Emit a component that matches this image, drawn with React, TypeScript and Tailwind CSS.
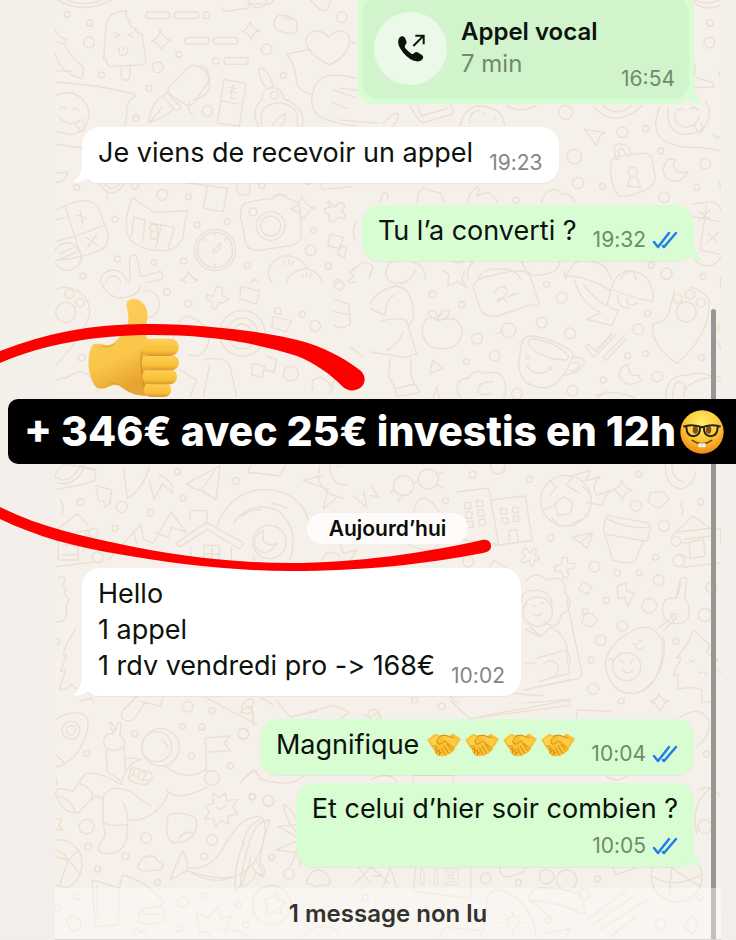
import React from "react";
import clsx from "clsx";

type Doodle = {
  x: number;
  y: number;
  dots: number[][];
  paths: string[];
};

// Wallpaper line art, one block per area, drawn at three times its final size
const doodles: Doodle[] = [
  {
    x: 0,
    y: 0,
    dots: [
      [202, 43, 9], [269, 69, 9], [267, 127, 16], [619, 46, 10], [537, 163, 9],
      [473, 202, 16], [305, 225, 9], [447, 265, 9], [408, 354, 9], [622, 333, 16],
      [648, 183, 10], [800, 148, 16], [1026, 51, 16], [850, 226, 9], [823, 286, 12],
      [230, 562, 9], [405, 557, 10], [487, 585, 16], [565, 590, 9], [730, 565, 21],
      [786, 557, 9], [345, 658, 9], [591, 674, 9], [682, 664, 9], [352, 777, 9],
      [462, 788, 8], [551, 783, 9], [249, 828, 9], [501, 875, 10], [742, 796, 9],
      [932, 751, 16], [941, 691, 9], [985, 799, 9], [925, 546, 8], [759, 636, 12],
      [812, 678, 43], [812, 678, 30], [645, 750, 62], [645, 750, 53], [340, 850, 40],
      [340, 850, 22], [202, 770, 41],
    ],
    paths: [
      "M172 0q80 45 162 0M200 0q55 22 106 0",
      "M311 178l7-105q8-40 62-40q-8 20 8 25q-4 26 18 28q2 16 20 15l12 77q0 14-15 17l-90 4q-16-1-14-21zM365 197l-1 32q0 12 12 12t13-12l1-34M344 98l15 8-15 8M400 96l-15 8 15 8M357 142v13q0 10 12 10t14-10v-15M370 142v12",
      "M445 36h57q8 0 8 10t-8 10h-57q-8 0-8-10t8-10zM531 36h57q8 0 8 10t-8 10h-57q-8 0-8-10t8-10zM562 112h57q8 0 8 10t-8 10h-57q-8 0-8-10t8-10zM648 112h57q8 0 8 10t-8 10h-57q-8 0-8-10t8-10zM680 173h57q8 0 8 10t-8 10h-57q-8 0-8-10t8-10z",
      "M480 90q8 27 34 31q-26 9-28 32q-10-26-31-30q22-6 25-33zM750 65q7 23 29 26q-23 7-25 28q-9-22-29-25q20-6 25-29z",
      "M165 85q8 30 35 32l-10 15-25-8M165 160q15 60 80 75q16-38-15-50q-30-30-38-60M165 212l52 2",
      "M165 246q130 8 234 35q12 3 4 10q-30 18-22 50l-6 37M165 432l80 12M165 287q40-20 72 2q38 26 27 70q-10 40-50 44l-49-8M178 328q10-16 20 0M218 330q10-14 18 3M178 352q28 30 62 10M225 372l18 22q14-2 12-15l-8-20",
      "M562 205q20-20 45 3q24 14 18 40l-45 62q-14 12-28 1l-40-26q-15-12-2-28zM600 198l20 8q12 32 8 62q-14 26-48 30M495 284q-6 10 4 18l24 26q10 8 20-6l-42-45zM495 284q-40 20-50 84q54-14 75-42M447 368l40-45M567 305q-8 30 12 38",
      "M672 238l66 12-20 128-66-8zM662 302l65 12M688 262l22 4M700 254l-8 36q2 8 14 6M688 275l22 4",
      "M775 378q-26-44 12-80q-4-24 20-34q38-6 44 32q70 30 55 82M786 378q-16-64 50-70q66 6 55 70M780 205q22-4 40 56M802 268q-30-34-24-63M818 378q10-24 38-38q2 24-14 38",
      "M668 22q-6 12 10 12l65-10q8-6 2-14l60 4q10-4 16-14M745 0q10 28 35 22q20-2 18-22M930 0l32 30q26 10 28-30M830 50q20-12 60 12v35q-26 10-64-10q-10-18 4-37zM852 45l4 10 24 4",
      "M988 195q-90-48-64-90q32-28 62 8q30-36 60-8q14 56-58 90zM860 162l70-14M860 162q30 40 30 90q12 24 42 30M1065 235q-90-26-118 18q-28 60 10 96q50 24 110 28M1000 270l65 22M995 307l50 20M1048 125l16 4",
      "M166 515q20 10 36 0q0 30-36 33M295 547q40 64 80 0M312 547q24 36 50 0M322 582v18",
      "M165 632q45-26 90-30q34 2 44 28l24 70q6 36-24 52q-70 26-130 28M195 618l52 162M165 725q60-12 142-48M230 645l30 10M240 632l8 38M258 712l35 24M290 704l-28 40M165 660l35-8M180 760l40-18M170 782l60-26",
      "M402 592l10 12 52 34 30-2 70-4q-12 36-14 78q-14 40-60 42q-66 0-98-32q-20-30-10-80q10-40 20-48zM402 652l-8 58M434 660q0 30-8 68M484 672l-18 78M524 682l-20 66M400 652l34 8M448 668l76 14M458 672q-20 14 0 22q-16 20 4 24q20-8 6-24q14-16-10-22",
      "M550 547l130 18M622 560l-12 66 60 9 12-72M962 550l4 18 90-8",
      "M735 610q40-12 84-14q10-14 36-8l12 10q30 2 33 30l4 76q-2 26-30 32l-100 16q-34 0-38-30l-14-70q-2-30 13-42zM818 590q20-14 38-2M906 590q10 28 38 34q-28 14-32 36q-14-26-40-34q26-8 34-36z",
      "M985 603q10 6 20 18q14-16 22-14q14 10-2 26q16 12 8 24l-20-6q-8 20-24 12q-6-10 0-20q-20-4-14-18l18-4q-14-14-8-18zM1078 595l24 5-3 18-22-4zM990 702l40 10-8 34-38-8zM1020 734l20 12-8 28-18-10z",
      "M640 750l20-20q6 10-8 24q-20 6-12-4M645 700v6M692 750h8M645 792v6M600 750h-8M680 715l-6 5M612 718l6 4",
      "M390 838l-2-60q6-20 22-10l12 62 60-16q12 10 2 24l-100 24zM400 862l36 60M165 870q10-14 30-8q30-8 34 18q30-6 34 16",
      "M565 815q10 22 30 25q-22 8-26 25q-10-22-28-25q20-6 24-25zM615 870l20 5 10-24 16 4-2 20q20 6 24 12l-14 10-16-2-8 24-14-6 2-20-20-4z",
      "M722 870l20-20 40 14-8 30-50-4zM750 852l12-14 14 8-4 18",
      "M805 830q-4-44 48-62q6 4 10-2q60 16 55 42M805 830q20 40 58 36M850 782l6 14M866 778v14M880 782l-4 12M858 855q4-40 58-50q50 10 54 60q-10 30-30 36M905 822l6 12M920 818v14M934 820l-3 14M858 855q0 30 20 46",
      "M1068 800q12 2 14 14l18-18 8 10-20 18 24 8-4 14-24-4 2 18-14 2-4-18-18 8-4-12 16-10-14-14z",
      "M1080 650q-34 36-10 76M1000 850l14-14 16 14-12 16z",
    ],
  },
  {
    x: 340,
    y: 0,
    dots: [
      [1110, 68, 10], [1108, 128, 16], [677, 337, 21], [847, 397, 16], [917, 386, 9],
      [703, 470, 22], [962, 453, 9], [1096, 491, 16], [714, 549, 17], [788, 559, 9],
      [1070, 562, 9], [973, 592, 16], [528, 601, 9], [934, 796, 9], [979, 821, 17],
      [878, 515, 14],
    ],
    paths: [
      "M1060 8q40 28 85 6M1062 0q40 18 80-2",
      "M960 320q-30 70 10 100q40 26 110 22l64 10M985 320q-10 60 30 80q60 12 86-30q16-40-4-66M1004 340q-2 36 30 42q40-4 44-36M1010 332q12-14 22 0M1050 328q14-12 24 2M1064 376l10 22q12-2 16-10l-6-22M1064 190q4 30-4 40l60 18v14h-60",
      "M734 388l60 10q-20 10-24 40zM1120 405l12 10 10-8M1138 215v15M1136 540l6 24",
      "M824 452q-6-24 24-20q20 6 26 30l-14 8q-6-20-16-24q-12 2-8 14l2 14-10 4zM828 470l80-10q26-2 30 24l8 50q-2 24-26 34q-60 28-86 18q-26-38-22-90q2-20 16-26zM872 528l-10 30 40 4-14-34",
      "M982 478q-20 30-6 52q40 34 68-16q-28 10-38-6q-12-14 0-28q-14-6-24-2z",
      "M1058 612l60-8q20 6 27 30M1058 650l88 16M1100 618l-20 130M1080 635l30 24M1110 630l-34 34M1105 700l28 28M1135 696l-34 34M1084 750l60 14M1064 780q44 40 80-10",
      "M210 318q20 40 38 50l90-26q4-18-6-26M234 318l10 30 76-22M360 378q14-60 60-60q70 4 74 60M390 370q-4-36 30-40M434 338v6M464 352v6M760 318q60 74 146 0M790 316q40 40 84 0M500 316q40 26 90 0M130 370q30-36 46-28q-4 30-26 44M0 265l50 5M0 360l118 10",
      "M382 610q4-30 30-52q10 10-2 30l20-8 20-2 24 30M604 608q6-34 34-38q20-4 24 12q36-4 42 26M232 608q0-34 18-44q16 8 50 14l16 30M120 608l10-30 14 4-2 20",
      "M40 810q40-40 58-8l-10 32M135 820q10-46 44-40q30-12 44 10q30 0 34 48M330 780q34 20 54-10l14 20q-24 20-12 50M414 840q14-40 60-32q50-6 68 30M545 782q14 54 60 42q52-4 54-42M676 838q20-60 60-58q64 4 78 58M840 838q20-30 42-22l6 22",
    ],
  },
  {
    x: 0,
    y: 280,
    dots: [
      [565, 71, 10], [501, 36, 10], [197, 97, 30], [208, 42, 14], [240, 68, 13],
      [245, 233, 10], [727, 160, 68], [727, 160, 46], [727, 160, 28], [907, 103, 9],
      [946, 138, 16], [873, 281, 22], [532, 575, 9],
    ],
    paths: [
      "M165 30q40-20 80 12q26 20 24 58q-14 60-100 154M165 305q20-16 30-10l40-20q40-2 60 60M306 10q14 40 54 44q60-6 60-40M430 32q50 2 48 44q-4 30-36 40",
      "M620 45l20 4 10-30 18 4-2 24q18 6 20 12l-16 10-14-2-8 22-12-6 2-18-18-6zM722 20l56 12-8 40-50-16zM818 110l56 12-14 34-44-14zM824 86l16-4 6 22-20-4zM1000 95l50 10M1005 58l42 14 4 60q-30 20-48 2M1000 20l16-16 18 8-10 20z",
      "M520 190q-4-60 40-82q70 20 66 80q-20 52-58 36M560 150l8 4M590 160q20 12 30 2M540 270l50 30-20 50M610 240q70-14 80 20l20 90M630 250l-20 100M758 250l36 8-6 34-34-8zM800 228l30 10-8 38-28-6M940 330q-14-34 20-38q24 6 40 36M990 340l30-90M1050 200l40 30",
      "M165 590q10-44 50-34l70 14",
    ],
  },
  {
    x: 370,
    y: 270,
    dots: [
      [188, 73, 10], [275, 104, 9], [321, 206, 16], [374, 257, 16], [290, 275, 9],
      [530, 43, 9], [575, 83, 16], [515, 158, 16], [416, 181, 22], [600, 190, 16],
      [890, 11, 16], [999, 19, 9], [833, 130, 9], [805, 178, 16], [773, 257, 9],
      [826, 251, 9], [700, 330, 9], [862, 320, 16], [994, 263, 9], [608, 362, 16],
      [441, 371, 16], [949, 126, 30], [923, 86, 13], [960, 73, 14], [992, 98, 13],
      [473, 262, 5], [541, 294, 5],
    ],
    paths: [
      "M50 0q-10 40 40 40q34-4 48-40M0 100q20-40 80-52q40 10 46 50q14 50-10 66M0 116l46 20q0-50 28-60M36 152q40-10 72-2l32 100-30 12-110-16M100 186q-20 40-50 56M60 262l-4 58 20 36M122 264v52l14 30M76 356l60-14 14 26-70 12z",
      "M206 148q-50-20-49 40q10 50 54 48q60 4 66-52q-8-48-56-36zM204 148q4-14 14-18M204 152q-36-14-28-30q26-4 28 22q10-30 34-20q0 20-30 28",
      "M216 0l20 14-2 34 30-14 26 20-14-28 8-24",
      "M360 18q80-22 105-12q14 6 18 22l26 78q-10 4-26-2l-100 34q-40 4-52-20l-20-60q-8-30 49-40zM372 70q10-22 30-20q20 12-4 34q-24 20-14 6q10-14 28 8M412 80l32-10",
      "M586 0l-4 18q60-4 140 44q16-60 60-60q70 10 68 92q-50-6-120-34M614 32q20 70 78 96l-42 20 76 18 20-46q-26 0-34-16l10-44M640 44q50 60 76 64M744 76q-4 40 36 38M770 84q0 34 34 14",
      "M376 190q12 2 22-8M452 240q2-38 24-42q60 0 126 44q12 8 6 20q-30 80-80 92q-80-4-82-70zM474 216q0-14 36-6q60 16 84 46q4 14-10 14q-60 0-104-38zM610 262q24-2 34 14q-10 30-60 40M610 280q20-8 20 4q-16 22-30 18M470 284q20 40 66 18",
      "M646 228l22 30q4 4 8 0l60-62M646 228q10-10 18 4l12 12 50-54M680 244l46-50M700 262l66-66M710 270l60-64M700 262l4 10",
      "M914 62l-16 60q-2 30-50 40q-4 70 74 118q60-50 88-120q10-60 8-70q-20-30-60-40",
      "M775 282q-26 10-28 30q16 50 70 18q-14-4-6-14q-40 6-36-34zM188 270l30 24-38 18zM190 384l10-34 8 34M264 368q-12-40 30-44q20-30 50-14q50-12 60 24q8 40-4 50M262 368l12 16M370 336q-40-4-48 24q10 20 40 10",
      "M676 376q60-20 120 8M680 384l30-20M888 384q-2-70 62-68q50-20 102 20M908 384q0-50 22-50q24 10 10 46M942 360q36-40 112-40M1050 165l-8 12 10 8M1052 22v34",
      "M1030 210q22 10 22 30M150 630q14-40 50-30l16 28",
    ],
  },
  {
    x: 0,
    y: 460,
    dots: [
      [532, 35, 9], [242, 126, 10], [365, 141, 17], [452, 158, 10], [550, 115, 9],
      [345, 205, 9], [707, 63, 10], [280, 219, 14], [293, 292, 16], [170, 545, 9],
      [808, 246, 50],
    ],
    paths: [
      "M165 50q40 30 76-32M165 68q50 14 80-30l8-22M240 18l48 10-4 34q-60 20-120 26",
      "M288 76l48 14-6 28q-4 14 4 10l-20 14-2-20-16 2z",
      "M370 22l12 94q50-30 66-98M448 58l14 60 26-48 28 30q10-34-40-56M560 70l100-52-12 100-44-26q-20-2-44-22zM606 90l46-70",
      "M750 18q-14 30 10 20l80 10 14-28M910 62l56-16M910 62l70 24M984 86l-14 60 40-32M1060 108l40 34-8-50M960 18q-20 80 70 96M990 18q0 60 54 56M1012 18l6 4",
      "M725 170q30-26 60-20M814 130q30 4 44 14M650 200q40-110 150-112q110 10 130 110M725 304q50 20 34-20M700 190q50-70 130-40q70 50 40 150M790 210q-40 24-20 56q30 30 62-16q-30 10-42-8z",
      "M165 215l66-54 34 34M165 230l100-20M180 120q16 20 6 40M175 240h60v60h-60zM190 255h44v30h-44M165 320l120-14M260 216l-10 60",
      "M325 300l96-106 10 44 28 12 54-94 46 60-44-14-10 30-40-14M400 210l10 40M570 180v-18q2-10 10-10h36q8 0 6 12l-4 24M530 248l90-60 110 60q-4 20-16 16l-92-56-80 52q-10 0-12-12zM572 264v46M694 264v46M612 256h46v52h-46zM635 256v52M612 282h46",
      "M174 354q20-10 22 4l-10 20 14 10-8 14 16 16-10 16q10 60-33 50M226 510q-40 60-34 78l8-4-18 50q12 2 16-6l-20 60q30 4 32-16l20 14M236 700l42 10-6 20-30-4M540 712q40 50 60 0M780 712l34 30M965 300q20-40 54-10M1020 250l10 30 40-10-20 34",
    ],
  },
  {
    x: 370,
    y: 460,
    dots: [
      [308, 44, 10], [478, 58, 9], [227, 122, 9], [101, 77, 30], [175, 57, 30],
      [588, 122, 76], [807, 43, 9], [798, 137, 16], [882, 197, 17], [992, 126, 9],
      [542, 233, 10], [674, 320, 16], [742, 338, 10], [807, 338, 9], [857, 292, 9],
      [866, 361, 16], [708, 421, 9], [838, 437, 22], [757, 498, 16], [692, 541, 16],
      [663, 600, 9], [670, 687, 16], [918, 544, 9], [1024, 382, 16], [1005, 465, 20],
      [754, 724, 9], [770, 620, 42], [911, 470, 8], [918, 244, 14], [927, 303, 17],
      [503, 455, 44], [134, 722, 9], [216, 740, 9], [384, 20, 22], [295, 305, 16],
    ],
    paths: [
      "M130 72q8-10 16-4M72 88l-10 10M92 108l-8 18M204 48q10-20 14-6M202 74l18 10",
      "M0 70l24 40-24-4M260 96l96-12 30 170-106-14M362 120l104-12 20 134-110 14M284 128h18v18h-18zM320 122h18v18h-18zM288 156h18v18h-18zM324 150h18v18h-18zM292 184h18v18h-18zM328 178h18v18h-18zM392 146h18v16h-18zM428 142h16v16h-16zM396 174h18v16h-18zM430 168h16v16h-16zM418 246v-34l22-3 4 36",
      "M100 250q34-50 34-110q24-60 74 16M110 252q90 40 100-10",
      "M555 130l28-20 26 18-8 32-36 6zM540 62l18 20-20 26M608 50l-18 26 40 24M640 80l20 20M544 174l16 14M632 178l-20 10M520 150l34-14M600 48l60-16-14 30 46-12q-30 20-14 56l50-16q-32 20-30 46l-50-8",
      "M756 62q10 24 30 28q-24 10-28 28q-12-22-28-28q20-8 26-28zM842 98l40-4 16 24-30 26q-20-4-34-20zM886 14q0 70 50 72q36-10 40-50M906 14q0 46 34 50M938 120q-10 16-2 24q8 8 0 18",
      "M712 166l128 24v20l-8 34-128-22q-8-20 8-56zM710 176q60 32 128 26M704 222l24 78q40 14 68 4l24-62M604 232l64-14-16 48-20-18zM636 244l28-24",
      "M905 230l64-62 50 34M920 216l112-12 20 4M945 238l80-10M930 250q20-6 28 6M958 246l42-8 6 50-46 8zM920 285q20-6 30 8M940 322l114-14",
      "M470 264l10 16 10-16q10 0 8 12l-6 8 16 8q0 12-14 8l-6 18q-10 0-10-18l-14 8q-14-2-6-14l10-6-12-10q2-12 14-14zM576 292h16v18h22v14l-22 4 4 22-16 4-6-22-20 2v-16l20-4z",
      "M638 366l28 14-12 24-28-14zM742 378l26-8 2 24 22 4-18 42-10-28-20 4zM645 460l20 0 20 22-24 20-26-12zM636 448l14-2 6 14-16 6z",
      "M470 360q30-30 60 0q60-20 56 40q34 40-14 66q-6 50-48 20M455 424q-4-30 34-32q50-8 58 44M480 500l32 28 30-26q30 10 46 48l14 60M466 506l46 26M590 420l46 220q0 14-20 18l-110 22M498 596l90-26 10 70-90 24M498 608l-32 4M520 612q24-20 44 4q4 30-20 36M488 440q6-8 10 0M512 432q6-8 10 0M490 462q14 14 26-4",
      "M706 610q10-60 70-90q60-40 94 10q14 20 6 60q-12 90-80 110q-80 4-90-90zM880 530q12 70-24 124q-20 40-60 46M790 550q8 10 14 0M806 540q8 8 14-2M796 560q8 14 24 2M750 600l12 8M790 600l-10 10M756 630q18 18 32 0M716 600q10-8 14 6",
      "M862 508l46-38M880 512l40-38M880 430q10-20 38-14l14-60q10-8 18 0l-6 60q20 18 10 60q-20 24-60 10q-24-20-14-56zM934 370l-14 44",
      "M970 510q-24 60-50 84h14q-20 40-24 50h14l0 44q40-10 70 0M970 510l50 46-10 20 34 26-20 10 30 30M986 640q20-10 24 8M960 600q8 10 14 0M996 690v36h30",
      "M868 700q6 22 28 24q-22 6-26 22M868 700q-6 20-26 24l18 14M465 690l136-32M240 710q60 60 96 30l266-22-12 20M430 700l90 8",
      "M360 320l10-18 40 20M1052 206v40",
    ],
  },
  {
    x: 240,
    y: 700,
    dots: [
      [38, 290, 9], [86, 302, 16], [95, 471, 9], [147, 522, 16], [10, 102, 16],
      [605, 19, 10], [1143, 2, 9], [1400, 162, 9], [1395, 380, 21], [737, 535, 16],
      [835, 548, 9], [1073, 537, 9], [1310, 530, 76], [920, 530, 22], [980, 540, 30],
      [95, 615, 58], [1262, 674, 16], [925, 660, 9], [1380, 592, 9], [376, 594, 9],
      [818, 668, 18], [1032, 583, 16], [400, 44, 16],
    ],
    paths: [
      "M0 40q20-30 40-6v40M110 0q40 60 50 50l120-34M160 50l70-16M280 16l50 20-28 20M370 44l24 8 20-16 10 14-20 26M630 0l60 56 300-56M690 56l300-40M1010 54l2-24 100 4M1240 0q10 24 24 32q4-22 22-32M1320 52q60-40 86 10q10 40-36 80",
      "M0 250q50-60 60-14q90 30 130-8M10 236l32-28 14 20M390 240q60-30 80 6M520 246v-20h120v18M1100 230q30 20 60 0M1376 270q40-20 66 20M1370 400q-20-100 50-140",
      "M0 560q10-80 30-140q20-60 60-60q-30 90-30 130q20 10 10 40l-22-14q-10 40-48 44M130 312q40 20 60 100q-50-30-60-100M180 416l-66-36 56-6M180 420l-72 30 60 8M150 500l30-60v60",
      "M236 510q-20 0-28 18q-20 24 10 26q10 10 26 0q30 10 26-14q-10-26-34-30zM346 550l48-50 54 50M356 502l36 48M400 528h20M430 560l20-56 20 56M528 504l-8 60q0 10 14 12l148 18q10-4 10-16v-70M780 504q0 30 30 26q40-10 50-26",
      "M74 598l20-6 16-14 6 22 22 8-18 14 4 20-24-8-22 12 4-22zM865 600q10-44 50-36q60 0 110 20l10 60q-80-40-170-44zM870 600l60 50M1040 660l120-90M1056 676l130-90M1080 690l140-90M1110 710l80-60M740 600q10-40 60-24q80 40 90 140M740 600q0 60-20 116M1240 530q60 40 146-6M1300 456l-12 130M1260 480l120 80M1116 500l14 24 60-22M1356 700q-40-20 0-50q30 30 0 50M600 716q0-34 20-34l100 10M920 700l70-14-14 30M180 716q50-60 120-20",
      "M818 634v14M818 690v12M790 668h-12M844 668h12M800 650l-8-8M836 650l8-8",
    ],
  },
  {
    x: 0,
    y: 690,
    dots: [
      [213, 121, 27], [213, 121, 14], [260, 190, 9], [405, 131, 9], [547, 109, 9],
      [606, 111, 9], [636, 62, 9], [563, 50, 16], [730, 131, 16], [575, 199, 9],
      [691, 228, 9], [260, 410, 22], [438, 444, 16], [265, 470, 10], [376, 498, 10],
      [293, 537, 9], [472, 577, 9], [613, 499, 10], [637, 450, 16], [757, 320, 10],
      [805, 333, 16], [815, 501, 9], [866, 551, 16], [636, 264, 22], [482, 172, 56],
      [470, 170, 45], [232, 620, 9], [175, 653, 9], [549, 635, 16], [616, 616, 9],
      [536, 716, 9], [716, 644, 9], [737, 704, 9],
    ],
    paths: [
      "M165 90q40-30 84-18q20 8 14 40q-14 80-80 116l-18 2M165 190l28 30M165 262q10 6 4 24M238 34l38-10 4 14M370 60l50-50M366 66q-10 30 30 26q20-20 38-54M420 34l60 14 8-22M620 24l150 80M730 40q20-20 30-10l-6 38q-20 10-30-6zM740 48l18 4M780 24q60 20 46 60",
      "M312 146q10-20 28-14l-12-34q10-4 18 26q6-34 18-24l-4 36q20 14 12 36q-40 20-56-2q-8-14-4-24zM318 180l4 66 40 26M372 176l4 44M374 206q26-4 50 2M362 284q20-70 60-74M494 228q70 50 124 10M500 300q30 40 124-10M376 206v40M620 244l-4-100 74-6-18 22 20 22-68 4M486 150q16 10 18 26",
      "M396 232l50 12q14 8 10 20l-14 18q-20 4-46-6q-14-8-8-22zM404 240l-6 16 20 4M420 244l-6 26M428 246q20 2 4 16l-6 8 18 2M258 250q50-4 104 34M258 250q-20 20-38 54q-60-20-52 10q20 60 66 54l50-50 26 8M240 282q40 10 38 50M170 320q40 0 54 44M310 320q20-40 80-16l62 44M310 320v80q30 10 70 4M370 340q14 20 12 50q80 10 124-80M310 400l6 40q-40 40-6 50q80 10 72-90",
      "M505 376q30-14 80 6q10 20-2 50q-20 26-60 26q-34-10-18-82zM536 456q0-30 42-30M640 308l16 16 20-14 4 22 34-4-16 22 16 22-30 6 2 24-24-10-16 20-6-26-26 2 14-20-12-20 24-8zM650 350q10 16 30-4",
      "M510 570l36-86q20 20 14 50q80 10 120-80q50-80 100-74q20 10 14 50q-10 70-44 100q-50 60-190 12zM728 470q6-60 50-80M732 460q-30 60-26 140q20 0 46-96M768 512q20 20 20 50q-20-10-34-36M560 540q80 50 140 20M724 448l4 4",
      "M420 518q8-18 28-20q24 0 24 16q24 0 12 22q-10 8-26 4q-20 8-34 0q-20-6-4-22zM165 450q50-4 76 40q20 70-40 104l-36-10M165 500l40 10 34 40M205 510l30-30M205 510l-26 76M165 480q30 10 40 30M824 372l70 10-8 32M830 454l60-4-10-34",
      "M276 570l82 24 10-40q90 30 124 88l-70 20M276 570l10 140M290 588l4 110M358 594l-4 112M415 676q0-18 30-22h42q10 6 6 36q-30 20-74 8zM420 672h70M290 710l60-6M200 700q0-20 20-24q26 10 22 34q-20 30-42-10zM590 670l34 14 30-36 10 40 30-10-20 60M600 730q20-14 30 10M590 670l10 60M165 385l22 4-10 14 10 18-22-4M400 730q10-30 20 0q10-20 20 10M660 720q60-10 90 30",
    ],
  },
];

// Visible extent of each block above, so neighbours do not draw over each other
const extents = [
  [1068, 850],
  [1150, 840],
  [1110, 600],
  [1060, 585],
  [1110, 690],
  [1060, 730],
  [1450, 720],
  [820, 750],
];

function Wallpaper() {
  return (
    <svg
      className="absolute inset-0 h-full w-full"
      viewBox="0 0 736 940"
      preserveAspectRatio="xMinYMin slice"
      aria-hidden="true"
    >
      <defs>
        <clipPath id="paper">
          <rect x="55" y="0" width="666" height="940" />
        </clipPath>
        {extents.map(([w, h], i) => (
          <clipPath id={`area${i}`} key={i}>
            <rect width={w} height={h} />
          </clipPath>
        ))}
      </defs>
      <rect x="55" y="0" width="666" height="940" fill="#f5f0e9" />
      <g
        clipPath="url(#paper)"
        fill="none"
        stroke="#eadfd2"
        strokeWidth="4"
        strokeLinecap="round"
        strokeLinejoin="round"
      >
        {doodles.map((d, i) => (
          <g key={i} transform={`translate(${d.x} ${d.y}) scale(0.3333)`}>
            <g clipPath={`url(#area${i})`}>
              {d.dots.map(([cx, cy, r], n) => (
                <circle key={n} cx={cx} cy={cy} r={r} />
              ))}
              {d.paths.map((p, n) => (
                <path key={n} d={p} />
              ))}
            </g>
          </g>
        ))}
        <g strokeWidth="1">
          <path d="M421 869h3v16h-3zM430 874v1M430 882v1M435 869h3v16h-3zM445 869h13v16h-13v-3h9v-4h-6v-3h6v-3h-9z" />
        </g>
      </g>
    </svg>
  );
}

function RedLoop() {
  return (
    <svg
      className="pointer-events-none absolute inset-x-0 top-0 z-10 w-full"
      viewBox="0 0 736 940"
      fill="#fe0000"
      aria-hidden="true"
    >
      <path d="M0 351C48 332 98 323 153 324C213 325 271 332 308 343C332 351 348 361 361 371C366 376 366 384 360 388C354 392 347 391 342 386C330 374 315 363 297 356C250 341 205 335 152 335C95 335 45 344 0 363Z" />
      <path d="M0 507C40 527 82 536 120 544C170 555 230 563 290 563C355 563 425 553 482 540C488 539 491 542 491 546C491 550 488 552 483 553C425 564 365 571 290 571C225 571 165 562 118 554C75 547 38 537 0 519Z" />
    </svg>
  );
}

function ThumbsUp() {
  return (
    <svg
      className="h-[102px] w-[95px]"
      viewBox="50 30 285 306"
      role="img"
      aria-label="Pouce levé"
    >
      <defs>
        <linearGradient id="palm" x1="0" y1="0" x2="0.3" y2="1">
          <stop offset="0" stopColor="#fdd162" />
          <stop offset="0.7" stopColor="#fac548" />
          <stop offset="1" stopColor="#e7a431" />
        </linearGradient>
        <linearGradient id="finger" x1="0" y1="0" x2="0" y2="1">
          <stop offset="0" stopColor="#ffd05a" />
          <stop offset="0.7" stopColor="#fac037" />
          <stop offset="1" stopColor="#d9982c" />
        </linearGradient>
      </defs>
      <path
        d="M173 45C180 34 203 33 217 45C237 62 237 83 231 110C227 130 226 143 236 157L240 325C203 330 180 318 150 296C138 289 125 295 109 303C94 308 82 303 75 294C55 262 52 212 67 178C70 167 88 170 110 174C132 176 145 157 161 137C177 118 179 98 176 78C174 64 169 54 173 45Z"
        fill="url(#palm)"
      />
      <path
        d="M219 190C211 215 218 277 231 325"
        fill="none"
        stroke="#c98422"
        strokeWidth="5"
        opacity="0.6"
      />
      <path
        d="M96 176Q118 186 136 170M122 286Q135 290 150 294"
        fill="none"
        stroke="#dc9d2b"
        strokeWidth="3"
      />
      <rect x="224" y="285" width="81" height="45" rx="21" fill="url(#finger)" />
      <rect x="219" y="246" width="104" height="46" rx="22" fill="url(#finger)" />
      <rect x="217" y="204" width="112" height="46" rx="23" fill="url(#finger)" />
      <rect x="215" y="155" width="113" height="52" rx="25" fill="url(#finger)" />
    </svg>
  );
}

function Handshake() {
  return (
    <svg
      className="h-6 w-[34px]"
      viewBox="0 0 102 72"
      role="img"
      aria-label="Poignée de main"
    >
      <path
        d="M1 20L23 4Q27 2 31 5L42 8Q50 3 58 6L68 9L75 3Q79 1 83 5L101 17Q102 20 98 23Q91 37 84 44Q84 54 76 56Q72 64 64 63Q58 72 51 67Q46 74 39 68Q30 72 28 63Q20 60 22 51Q13 43 1 20Z"
        fill="#fbc02f"
      />
      <path d="M8 20L26 8L39 13Q26 26 32 35Q26 46 20 43Z" fill="#ffd24c" />
      <path d="M50 10L69 12L90 20Q86 36 78 40Q61 25 52 22Z" fill="#fdcb45" />
      <path
        d="M42 8Q27 20 30 30Q38 39 53 23L79 46M61 34L75 54M52 40L65 62M44 46L54 66M42 8Q53 3 68 11L78 14M22 50Q24 42 30 44L28 62Q30 50 38 51L37 67Q38 57 45 57M17 39Q22 42 28 38"
        fill="none"
        stroke="#cf8d1c"
        strokeWidth="3"
        strokeLinecap="round"
      />
    </svg>
  );
}

function NerdFace() {
  return (
    <svg
      className="h-11 w-11 shrink-0"
      viewBox="0 0 132 132"
      role="img"
      aria-label="Visage avec lunettes"
    >
      <defs>
        <radialGradient id="face" cx="0.5" cy="0.3" r="0.7">
          <stop offset="0" stopColor="#fff06a" />
          <stop offset="0.55" stopColor="#fdca38" />
          <stop offset="1" stopColor="#ee8a16" />
        </radialGradient>
      </defs>
      <circle cx="66" cy="66" r="65" fill="url(#face)" />
      <ellipse cx="46" cy="59" rx="8" ry="12" fill="#8a4e12" />
      <ellipse cx="86" cy="59" rx="8" ry="12" fill="#8a4e12" />
      <path
        d="M17 48Q38 42 60 50Q62 77 41 79Q20 79 19 52ZM115 48Q94 42 72 50Q70 77 91 79Q112 79 113 52ZM60 53Q66 49 72 53M10 49L20 50M122 49L112 50"
        fill="none"
        stroke="#26221d"
        strokeWidth="6"
        strokeLinejoin="round"
      />
      <path
        d="M37 91Q66 112 95 91"
        fill="none"
        stroke="#77400e"
        strokeWidth="5"
        strokeLinecap="round"
      />
      <path d="M55 100H77V108Q76 112 72 112H60Q55 112 55 108Z" fill="#f5f4ef" />
      <path d="M66 100V112" stroke="#bdb9ae" strokeWidth="2" />
    </svg>
  );
}

function Ticks() {
  return (
    <svg
      className="h-[18px] w-[26px]"
      viewBox="0 0 26 18"
      fill="none"
      stroke="#1f7fe8"
      strokeWidth="2.5"
      strokeLinecap="round"
      strokeLinejoin="round"
      role="img"
      aria-label="Lu"
    >
      <path d="M2 11L6 16L17 2M11 15L12 16L24 2" />
    </svg>
  );
}

function Tail({ sent }: { sent?: boolean }) {
  return sent ? (
    <svg
      className="absolute bottom-0 -right-[9px] h-5 w-6"
      viewBox="0 0 24 20"
      fill="#d9fdd3"
      aria-hidden="true"
    >
      <path d="M15 0C15 8 18 15 24 19C18 20 13 18 9 15C6 18 3 20 0 20V0Z" />
    </svg>
  ) : (
    <svg
      className="absolute bottom-0 -left-[9px] h-5 w-6"
      viewBox="0 0 24 20"
      fill="#ffffff"
      aria-hidden="true"
    >
      <path d="M9 0C9 8 6 15 0 19C6 20 11 18 15 15C18 18 21 20 24 20V0Z" />
    </svg>
  );
}

type BubbleProps = {
  children: React.ReactNode;
  time: string;
  sent?: boolean;
  tail?: boolean;
  stacked?: boolean;
  className?: string;
};

function Bubble({ children, time, sent, tail, stacked, className }: BubbleProps) {
  return (
    <article
      className={clsx(
        "relative flex rounded-[18px] px-4 pt-2 pb-3 text-[27px] leading-9 text-[#0c130c] shadow-[0_1px_1px_#0000000d] [font-variant-ligatures:none]",
        sent ? "self-end bg-[#d9fdd3]" : "self-start bg-white",
        stacked ? "flex-col items-end" : "items-end gap-4",
        className,
      )}
    >
      {tail && <Tail sent={sent} />}
      <div className="relative">{children}</div>
      <div
        className={clsx(
          "flex items-center gap-1.5 text-[21px] leading-4",
          sent ? "text-[#6f8a6c]" : "text-[#858585]",
          stacked && "mt-2.5",
        )}
      >
        <time>{time}</time>
        {sent && <Ticks />}
      </div>
    </article>
  );
}

function CallBubble() {
  return (
    <article className="relative -mt-2 self-end rounded-[18px] bg-[#d9fdd3] p-[5px]">
      <Tail sent />
      <div className="relative flex h-[102px] w-[327px] items-center gap-3.5 rounded-2xl bg-[#d2f4cc] pl-3">
        <span className="flex h-[73px] w-[73px] items-center justify-center rounded-full bg-[#eaf9e8]">
          <svg className="h-7 w-7" viewBox="0 0 84 84" aria-hidden="true">
            <path
              d="M4 18Q8 5 18 7Q23 8 28 21Q31 28 25 33Q21 37 25 43Q33 53 43 59Q48 62 52 57Q57 52 64 56L76 64Q81 69 77 75Q71 84 58 82Q39 80 20 58Q0 34 4 18Z"
              fill="#0a120a"
            />
            <path
              d="M49 36L80 5M55 5H80V31"
              fill="none"
              stroke="#0a120a"
              strokeWidth="6"
            />
          </svg>
        </span>
        <div className="text-2xl leading-8">
          <h2 className="font-semibold text-[#0c130c]">Appel vocal</h2>
          <p className="text-[#6f8a6c]">7 min</p>
        </div>
        <time className="absolute right-3.5 bottom-2 text-[21px] leading-6 text-[#6f8a6c]">
          16:54
        </time>
      </div>
    </article>
  );
}

export default function App() {
  return (
    <main className="relative min-h-screen overflow-hidden bg-linear-to-b from-[#f4f0e9] to-[#f3eeeb] font-['Inter','Liberation_Sans',sans-serif]">
      <Wallpaper />
      <RedLoop />
      <div className="absolute top-[309px] right-5 bottom-0 w-[5px] rounded-t-full bg-[#999795]" />

      <section className="relative flex flex-col pr-[42px] pl-[82px]">
        <CallBubble />
        <Bubble time="19:23" tail className="mt-[23px]">
          <p>Je viens de recevoir un appel</p>
        </Bubble>
        <Bubble time="19:32" sent tail className="mt-[22px]">
          <p>Tu l’a converti ?</p>
        </Bubble>
        <div className="mt-9 ml-1">
          <ThumbsUp />
        </div>
      </section>

      <h1 className="relative z-20 ml-2 flex h-[65px] items-center gap-1 rounded-l-[10px] bg-black pl-4 text-[41px] font-extrabold whitespace-nowrap text-white">
        + 346€ avec 25€ investis en 12h
        <NerdFace />
      </h1>

      <section className="relative flex flex-col pr-[42px] pl-[82px]">
        <p className="mt-[49px] -ml-px self-center rounded-full bg-[#fdfcfb] px-[22px] text-[21px] leading-[31px] font-semibold text-[#0c0c0c]">
          Aujourd’hui
        </p>
        <Bubble time="10:02" tail className="mt-6">
          <p>Hello</p>
          <p>1 appel</p>
          <p>1 rdv vendredi pro -&gt; 168€</p>
        </Bubble>
        <Bubble time="10:04" sent className="mt-[23px]">
          <p className="flex items-center gap-1">
            Magnifique
            <span className="ml-1 flex gap-1">
              <Handshake />
              <Handshake />
              <Handshake />
              <Handshake />
            </span>
          </p>
        </Bubble>
        <Bubble time="10:05" sent tail stacked className="mt-2">
          <p>Et celui d’hier soir combien ?</p>
        </Bubble>
      </section>

      <p className="relative mt-[21px] mr-[15px] ml-[55px] border-b border-[#d9d6d3] bg-white/40 text-center text-2xl leading-[51px] font-semibold text-[#333230]">
        1 message non lu
      </p>
    </main>
  );
}
